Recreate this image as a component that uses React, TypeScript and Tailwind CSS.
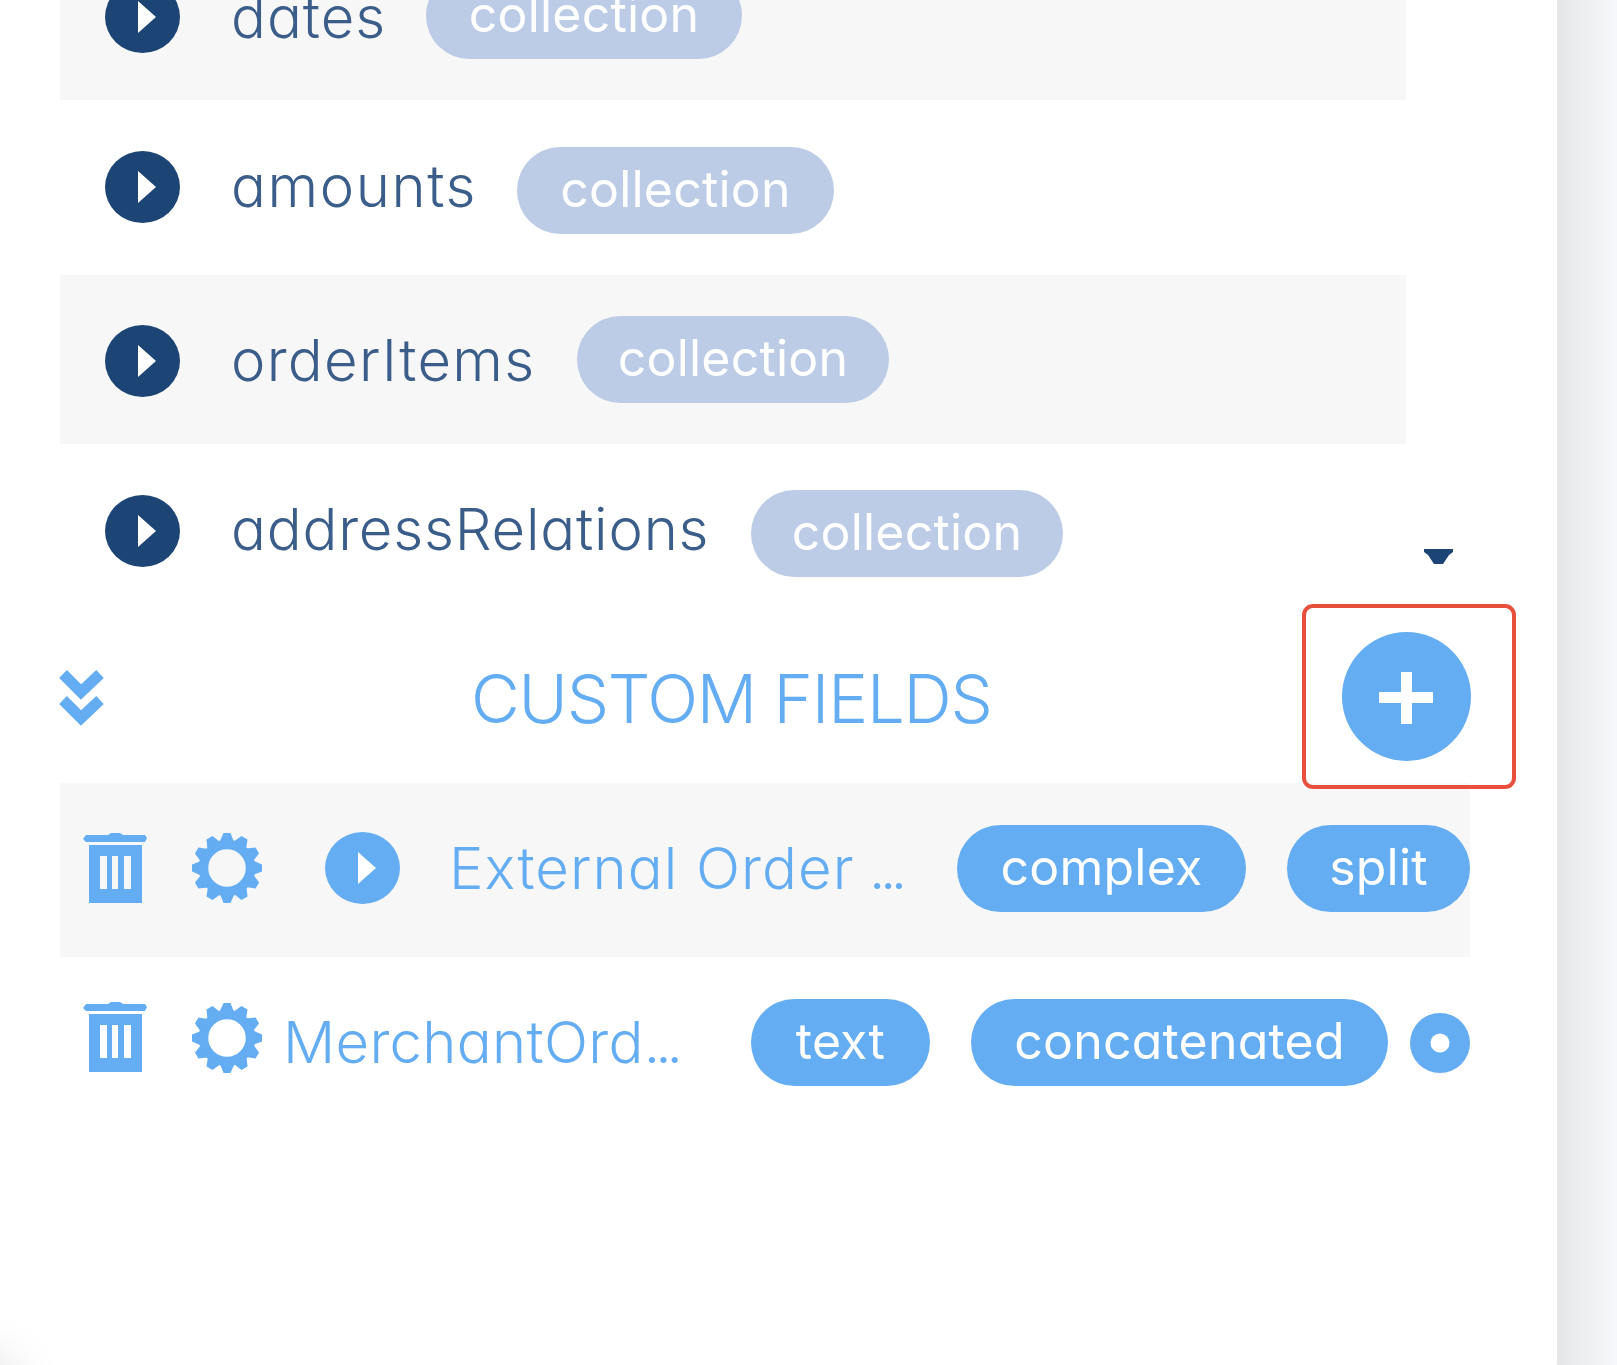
import type { ReactNode } from 'react';

const font = "font-['Inter','Lato',sans-serif]";

function PlayIcon({ className }: { className?: string }) {
  return (
    <svg viewBox="0 0 75 73" className={`h-[73px] w-[75px] shrink-0 ${className ?? ''}`}>
      <ellipse cx="37.5" cy="36" rx="37.5" ry="36" fill="currentColor" />
      <path d="M33 20v32l18-16z" fill="#fff" />
    </svg>
  );
}

function TrashIcon() {
  return (
    <svg viewBox="0 0 64 70" className="h-[70px] w-16 shrink-0" fill="currentColor">
      <path d="M3 2h22l3-2h9l3 2h22l2 3-2 4H3L0 6z" />
      <path fillRule="evenodd" d="M6 12h53v58H6zM17 23v33h7V23zM29 23v33h6V23zM41 23v33h7V23z" />
    </svg>
  );
}

function GearIcon() {
  return (
    <svg viewBox="-36 -36 72 72" className="h-[72px] w-[72px] shrink-0" fill="currentColor">
      <circle r="23.500" fill="none" stroke="currentColor" strokeWidth="9.500" />
      {Array.from({ length: 12 }).map((_, i) => (
        <path key={i} d="M-7.500-26L-3.500-35H3.500L7-26z" transform={`rotate(${i * 30})`} />
      ))}
    </svg>
  );
}

function Badge({ children, className }: { children: ReactNode; className: string }) {
  return (
    <span
      className={`flex h-[87px] shrink-0 items-center justify-center rounded-full pb-[3px] text-[50px] leading-none font-normal tracking-[0.2px] text-white ${className}`}
    >
      {children}
    </span>
  );
}

const fields = [
  {
    name: 'dates',
    row: '-mt-[65px] h-[165px] bg-[#f7f7f7]',
    label: 'w-[195px] tracking-[1px] -mt-[2px]',
    badge: 'w-[316px] -mt-[4px]',
  },
  { name: 'amounts', row: 'h-[175px]', label: 'w-[286px] tracking-[1.600px] -mt-[4px]', badge: 'w-[317px] mt-[6px]' },
  {
    name: 'orderItems',
    row: 'h-[169px] bg-[#f7f7f7]',
    label: 'w-[346px] tracking-[1.300px]',
    badge: 'w-[312px]',
    icon: 'mt-[4px]',
  },
  {
    name: 'addressRelations',
    row: 'h-[173px]',
    label: 'w-[520px] tracking-[0.800px] -mt-[4px]',
    badge: 'w-[312px] mt-[6px]',
    icon: 'mt-[1px]',
  },
];

export default function App() {
  return (
    <main
      className={`relative flex h-[1365px] w-[1617px] overflow-hidden bg-white font-light ${font} [font-feature-settings:'cv11']`}
    >
      <div className="flex w-[1557px] shrink-0 flex-col pl-[60px]">
        {/* Field list */}
        {fields.map((f) => (
          <div key={f.name} className={`flex w-[1346px] shrink-0 items-center pl-[45px] ${f.row}`}>
            <PlayIcon className={`text-[#1c4475] ${f.icon ?? ''}`} />
            <span className={`ml-[51px] shrink-0 text-[58px] leading-none text-[#3b5d8a] ${f.label}`}>
              {f.name}
            </span>
            <Badge className={`bg-[#bccce6] ${f.badge}`}>collection</Badge>
          </div>
        ))}

        {/* Custom fields header */}
        <div className="flex h-[166px] w-[1411px] shrink-0 items-center pb-[7px] text-[#64adf2]">
          <svg
            viewBox="0 0 46 56"
            className="mt-[2px] -ml-[1px] h-14 w-[46px]"
            fill="none"
            stroke="currentColor"
            strokeWidth="11"
          >
            <path d="M4 4l18 18L41 4M4 30l18 18L41 30" />
          </svg>
          <h2 className="mt-[4px] ml-[366px] text-[67px] leading-none tracking-[-1.200px]">CUSTOM FIELDS</h2>
          <button className="ml-auto flex size-[129px] items-center justify-center rounded-full bg-[#64adf2]">
            <svg viewBox="0 0 54 52" className="mt-[3px] mr-[1px] h-[52px] w-[54px]" fill="#fff">
              <path d="M22 0h11v20h21v11H33v21H22V31H0V20h22z" />
            </svg>
          </button>
        </div>

        <div className="flex h-[174px] w-[1410px] shrink-0 items-center bg-[#f7f7f7] pb-[4px] pl-[23px] text-[#64adf2]">
          <TrashIcon />
          <div className="ml-11">
            <GearIcon />
          </div>
          <PlayIcon className="ml-[62px]" />
          <span className="ml-[49px] text-[58px] leading-none whitespace-nowrap tracking-[1.100px]">
            External Order <span className="-ml-[3px] tracking-[-5.500px]">...</span>
          </span>
          <Badge className="ml-auto w-[289px] bg-[#64adf2]">complex</Badge>
          <Badge className="ml-[41px] w-[183px] bg-[#64adf2]">split</Badge>
        </div>

        <div className="flex h-[170px] w-[1410px] shrink-0 items-center pl-[23px] text-[#64adf2]">
          <div className="mb-[8px] flex gap-11">
            <TrashIcon />
            <GearIcon />
          </div>
          <span className="ml-[20px] text-[58px] leading-none whitespace-nowrap tracking-[0.300px]">
            MerchantOrd<span className="tracking-[-5px]">...</span>
          </span>
          <Badge className="ml-auto w-[179px] bg-[#64adf2]">text</Badge>
          <Badge className="ml-[41px] w-[417px] bg-[#64adf2]">concatenated</Badge>
          <svg viewBox="0 0 60 60" className="mt-[2px] ml-[22px] size-[60px]">
            <circle cx="30" cy="30" r="30" fill="currentColor" />
            <circle cx="30" cy="30" r="9.500" fill="#fff" />
          </svg>
        </div>
      </div>

      {/* Panel shadow */}
      <div className="flex-1 bg-gradient-to-r from-[#e4e6e7] to-[#f6f8fb]" />

      {/* Scroll arrow */}
      <svg viewBox="0 0 29 15" className="absolute top-[549px] left-[1424px] h-[15px] w-[29px]">
        <path d="M0 0h29v3l-4 3-6 9h-9L4 6 0 3z" fill="#1c4475" />
      </svg>

      {/* Highlight around the add button */}
      <div className="absolute top-[604px] left-[1302px] h-[185px] w-[214px] rounded-[11px] border-4 border-[#e84f3d]" />

      {/* Floating button */}
      <div className="absolute top-[1358px] -left-[80px] size-[94px] rounded-full bg-white shadow-[0_0_55px_rgba(0,0,0,0.16)]" />
    </main>
  );
}
